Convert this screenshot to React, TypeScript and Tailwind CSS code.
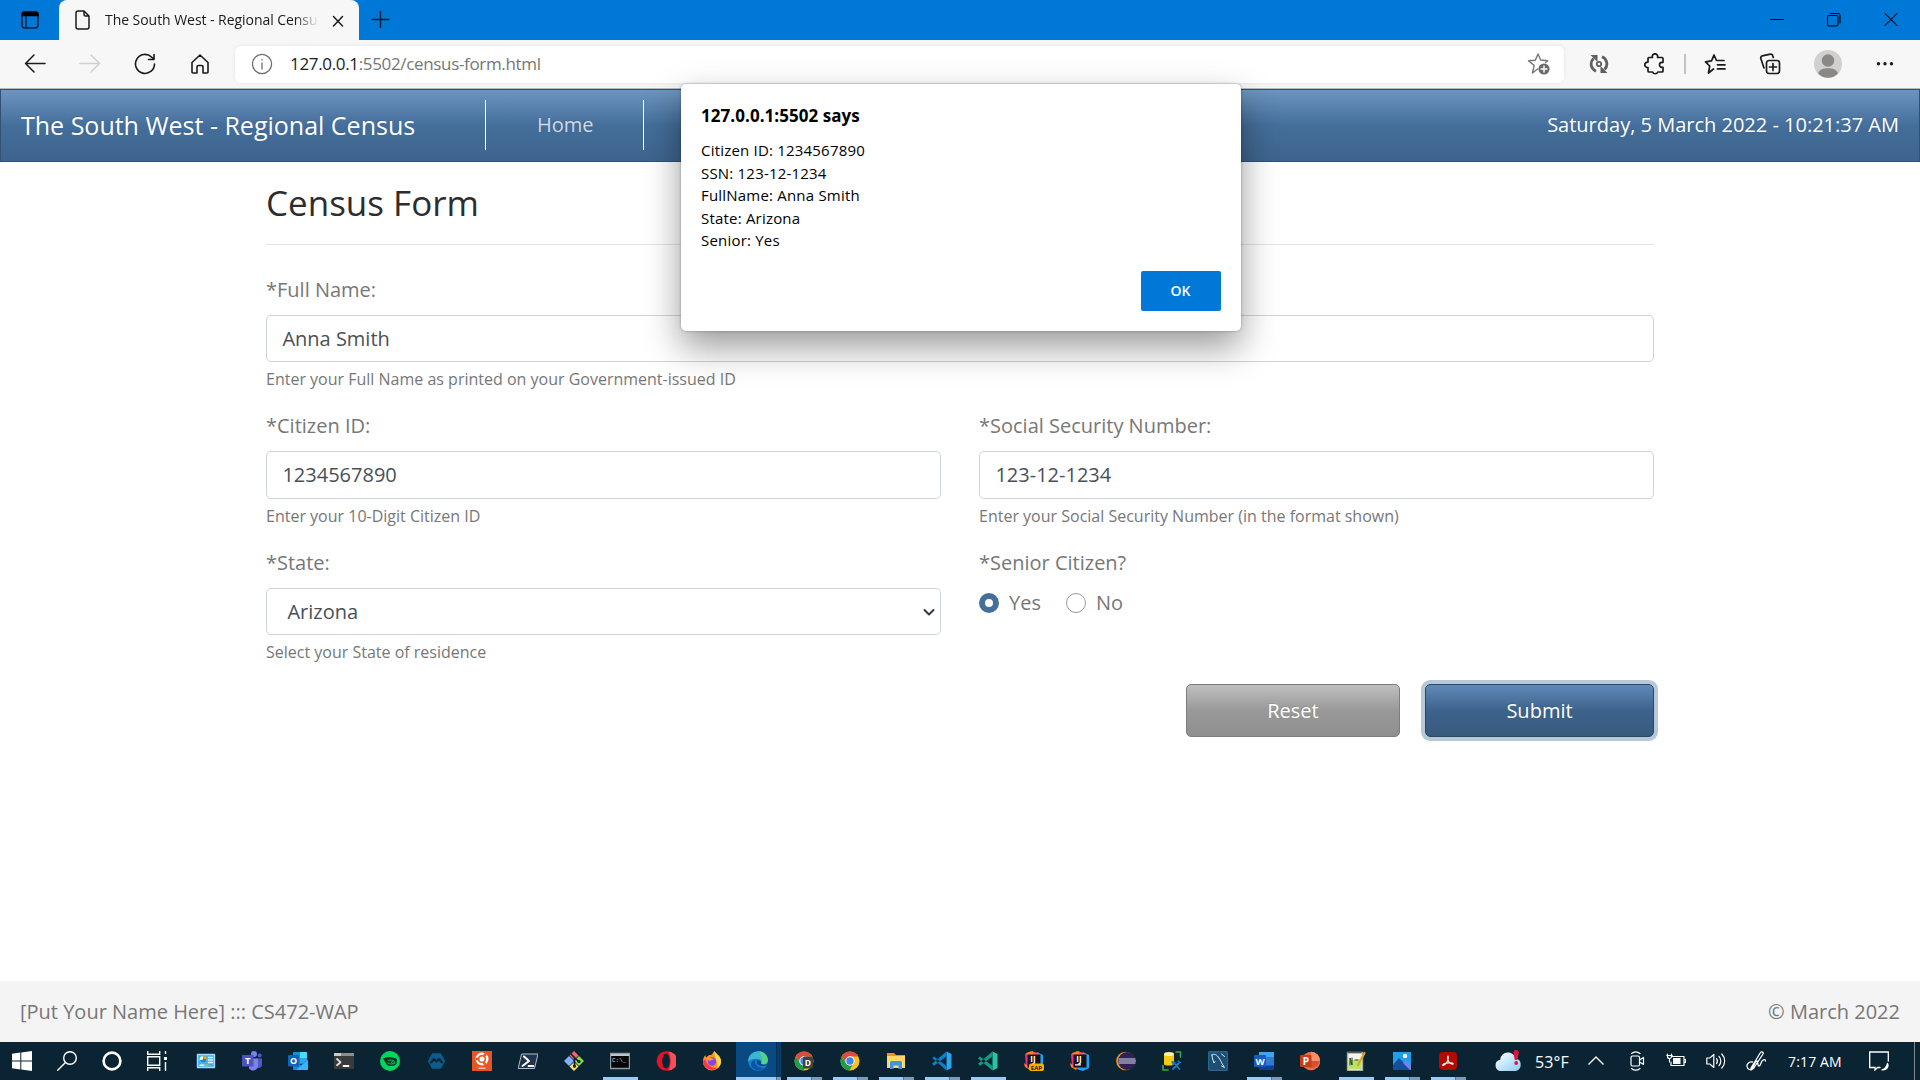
import React from "react";

const UI = "font-['Open_Sans',sans-serif]";

function Slot({ w, children, className = "" }: { w: string; children?: React.ReactNode; className?: string }) {
  return <div className={`flex h-full shrink-0 items-center justify-center ${w} ${className}`}>{children}</div>;
}

function Svg({ s = 20, children, stroke = "none", sw = 1.4, fill = "none" }: { s?: number; children: React.ReactNode; stroke?: string; sw?: number; fill?: string }) {
  return (
    <svg width={s} height={s} viewBox={`0 0 ${s} ${s}`} fill={fill} stroke={stroke} strokeWidth={sw} strokeLinecap="round" strokeLinejoin="round" className="block shrink-0">
      {children}
    </svg>
  );
}

function TabStrip() {
  return (
    <div className="flex h-10 items-stretch bg-[#0078d7]">
      <Slot w="w-[59px]">
        <Svg>
          <rect x="2" y="2" width="16" height="16" rx="3" stroke="#06203c" strokeWidth="1.6" />
          <path d="M1.2 6.2V4.4a3 3 0 0 1 3-3h11.600a3 3 0 0 1 3 3v1.800z" fill="#000" />
          <path d="M6 6v12" stroke="#06203c" strokeWidth="1.4" />
        </Svg>
      </Slot>
      <div className="flex w-[300px] items-center rounded-t-lg bg-[#f7f7f7] pl-[15px]">
        <Svg stroke="#1b1b1b" sw={1.5}>
          <path d="M2 3a2 2 0 0 1 2-2h6l5 5v11a2 2 0 0 1-2 2H4a2 2 0 0 1-2-2zM10 1v3.500a1.500 1.500 0 0 0 1.500 1.500H15" />
        </Svg>
        <div className="ml-[11px] w-[216px] overflow-hidden [mask-image:linear-gradient(to_right,#000_88%,transparent_99%)]">
          <div className="text-[14px] leading-[20px] tracking-[-0.05px] whitespace-nowrap text-[#1b1b1b]">The South West - Regional Census</div>
        </div>
        <div className="ml-[7px] mt-px">
          <Svg s={20} stroke="#1b1b1b" sw={1.5}><path d="M5.500 5.500l9 9.500M14.500 5.500l-9 9.500" /></Svg>
        </div>
      </div>
      <div className="flex items-center pl-[11px]">
        <Svg stroke="#021c33" sw={1.4}><path d="M10.500 1.500v16M2 9.500h17" /></Svg>
      </div>
      <div className="flex-1" />
      <Slot w="w-[57px]"><Svg stroke="#000" sw={1}><path d="M3.500 9.500h13" /></Svg></Slot>
      <Slot w="w-[57px]">
        <Svg stroke="#000" sw={1.1}>
          <rect x="3.500" y="5.500" width="10.500" height="10.500" rx="1.500" />
          <path d="M6.500 3.500h7.500a2 2 0 0 1 2 2V13" />
        </Svg>
      </Slot>
      <Slot w="w-[58px]"><Svg stroke="#041d35" sw={1.1}><path d="M4 3.500l12 12M16 3.500l-12 12" /></Svg></Slot>
    </div>
  );
}

function Toolbar() {
  return (
    <div className="flex h-12 items-center bg-[#f7f7f7] pl-[8px]">
      <Slot w="w-[54px]"><Svg s={22} stroke="#1b1b1b" sw={1.5}><path d="M21 10.500H1.500M10 2L1.500 10.500l8.500 8.500" /></Svg></Slot>
      <Slot w="w-[56px]"><Svg s={22} stroke="#cfcfcf" sw={1.5}><path d="M1 10.500h19.500M12 2l8.500 8.500-8.500 8.500" /></Svg></Slot>
      <Slot w="w-[54px]"><Svg s={22} stroke="#1b1b1b" sw={1.6}><path d="M20.500 11a9.500 9.500 0 1 1-3-7l2.500 2.500M20 1.500V6.500h-5.500" /></Svg></Slot>
      <Slot w="w-[56px]"><Svg s={22} stroke="#1b1b1b" sw={1.6}><path d="M3 9.500l8-7.500 8 7.500V19a1 1 0 0 1-1 1h-4v-6a1.500 1.500 0 0 0-1.500-1.500h-3A1.500 1.500 0 0 0 8 14v6H4a1 1 0 0 1-1-1z" /></Svg></Slot>
      <div className="ml-[7px] flex h-[37px] w-[1329px] items-center rounded-md bg-white pr-[13px] pl-4 shadow-[0_0_4px_rgba(0,0,0,0.08)]">
        <Svg s={22} stroke="#6e6e6e" sw={1.3}><circle cx="11" cy="11" r="9.600" /><path d="M11 10v6M11 6.500v.4" /></Svg>
        <div className="ml-[17px] text-[17px] tracking-[-0.34px] whitespace-nowrap text-[#767676]"><span className="text-[#1b1b1b]">127.0.0.1</span>:5502/census-form.html</div>
        <div className="flex-1" />
        <Svg s={24} stroke="#767676" sw={1.4}>
          <path d="M10.500 17l-5 4 1.600-7.600L1.500 8.800l6.800-.6L11 2l2.700 6 7 .8-2 1.800" />
          <circle cx="17" cy="17" r="5.600" fill="#6b6b6b" stroke="none" /><path d="M17 14v6M14 17h6" stroke="#fff" />
        </Svg>
      </div>
      <Slot w="w-[70px]">
        <Svg s={20} stroke="#5f5f5f" sw={2.8}>
          <path d="M7 17.200A7.700 7.700 0 0 1 4.500 4.500M13 2.800A7.700 7.700 0 0 1 15.500 15.500" strokeLinecap="butt" />
          <circle cx="10" cy="10" r="2.200" strokeWidth="1.800" />
          <path d="M1.500 1H8.500V8zM18.500 19H11.500V12z" fill="#5f5f5f" stroke="none" />
        </Svg>
      </Slot>
      <Slot w="w-[41px]">
        <Svg s={22} stroke="#1b1b1b" sw={1.7}>
          <path d="M5 4.500h3.500a2.700 2.700 0 1 1 5 0H18a1 1 0 0 1 1 1v3.800h-1a2.500 2.500 0 1 0 0 5h1V18a1 1 0 0 1-1 1h-4.200a2.800 2.800 0 0 1-5.200 0H5a1 1 0 0 1-1-1v-3.500a2.700 2.700 0 1 1 0-5.300V5.500a1 1 0 0 1 1-1z" />
        </Svg>
      </Slot>
      <Slot w="w-[20px]"><div className="h-5 w-[2px] bg-[#c3c3c3]" /></Slot>
      <Slot w="w-[39px]">
        <Svg s={22} stroke="#1b1b1b" sw={1.7}><path d="M9.500 16l-5 4 1.200-7L1.500 8.800l6-.9L10 2l2.500 5.500H20M13.500 11.800H21M13.500 15.900H21" /></Svg>
      </Slot>
      <Slot w="w-[71px]">
        <Svg s={22} stroke="#1b1b1b" sw={1.7}>
          <rect x="7.500" y="7.500" width="13" height="13" rx="2.500" />
          <path d="M14 10.500v7M10.500 14h7M5 15L1.800 5.500a2 2 0 0 1 1.500-2.600l8-1.700a2 2 0 0 1 2.500 1.500l.5 1.800" />
        </Svg>
      </Slot>
      <Slot w="w-[46px]">
        <Svg s={28}>
          <circle cx="14" cy="14" r="14" fill="#d2d0ce" />
          <circle cx="14" cy="10.500" r="6.200" fill="#8a8886" />
          <path d="M4 23.500c1.500-4 5.500-5.200 10-5.200s8.500 1.200 10 5.200a14 14 0 0 1-20 0z" fill="#8a8886" />
        </Svg>
      </Slot>
      <Slot w="w-[68px]"><Svg s={20} fill="#1b1b1b"><circle cx="3.500" cy="9.700" r="1.700" /><circle cx="10" cy="9.700" r="1.700" /><circle cx="16.500" cy="9.700" r="1.700" /></Svg></Slot>
    </div>
  );
}

function NavBar() {
  return (
    <div className="flex h-[73px] items-center border border-[#335172] bg-[linear-gradient(#6d94bf,#446e9b_50%,#3e648d)] text-white [text-shadow:-1px_-1px_0_rgba(0,0,0,0.1)]">
      <div className="w-[484px] pl-5 text-[25px] whitespace-nowrap">The South West - Regional Census</div>
      <div className="mb-[2px] flex h-[50px] w-[159px] items-center border-x border-white pl-[51px] text-[20px] text-white/75">Home</div>
      <div className="flex-1" />
      <div className="mb-[2px] pr-5 text-[20px] whitespace-nowrap">Saturday, 5 March 2022 - 10:21:37 AM</div>
    </div>
  );
}

function Field({ label, hint, children }: { label: string; hint: string; children: React.ReactNode }) {
  return (
    <div className="h-[136.4px] flex-1">
      <div className="h-10 pt-px text-[20px] leading-[28px]">{label}</div>
      <div className="flex h-[47.2px] items-center rounded-[5px] border border-[#ced4da] bg-white pt-[0.5px] pl-[15.4px] text-[20px] text-[#495057]">{children}</div>
      <div className="mt-[5px] text-[16px] leading-[24px]">{hint}</div>
    </div>
  );
}

function CensusForm() {
  return (
    <div className="h-[819px] bg-white px-[266px] text-[#777]">
      <h1 className="h-20 pt-px text-[35px] leading-[80px] text-[#2d2d2d]">Census Form</h1>
      <div className="mt-[2px] mb-[30px] h-px bg-[#e5e5e5]" />
      <div className="flex"><Field label="*Full Name:" hint="Enter your Full Name as printed on your Government-issued ID">Anna Smith</Field></div>
      <div className="flex gap-[38px]">
        <Field label="*Citizen ID:" hint="Enter your 10-Digit Citizen ID">1234567890</Field>
        <Field label="*Social Security Number:" hint="Enter your Social Security Number (in the format shown)">123-12-1234</Field>
      </div>
      <div className="flex gap-[38px]">
        <Field label="*State:" hint="Select your State of residence">
          <span className="ml-[5px] flex-1">Arizona</span>
          <span className="mr-[4px]"><Svg s={14} stroke="#343a40" sw={2}><path d="M2.500 5l4.500 4.500L11.500 5" /></Svg></span>
        </Field>
        <div className="flex-1">
          <div className="h-10 pt-px text-[20px] leading-[28px]">*Senior Citizen?</div>
          <div className="flex h-[30px] items-center text-[20px]">
            <span className="flex size-5 items-center justify-center rounded-full bg-[#446e9b]"><span className="size-2 rounded-full bg-white" /></span>
            <span className="ml-[10px] w-[57px]">Yes</span>
            <span className="size-5 rounded-full border border-[#999]" />
            <span className="ml-[10px]">No</span>
          </div>
        </div>
      </div>
      <div className="flex justify-end gap-[25px] text-[20px] text-white [text-shadow:-1px_-1px_0_rgba(0,0,0,0.1)]">
        <div className="flex h-[53px] w-[214px] items-center justify-center rounded-[5px] border border-[#7d7d7d] bg-[linear-gradient(#bfbfbf,#999_50%,#8f8f8f)]">Reset</div>
        <div className="flex h-[53px] w-[229px] items-center justify-center rounded-[5px] border border-[#2c4764] bg-[linear-gradient(#5f8ab9,#3d638b_50%,#385a7f)] shadow-[0_0_0_4px_rgba(96,132,170,0.45)]">Submit</div>
      </div>
    </div>
  );
}

function Dialog() {
  return (
    <div className="absolute top-[84px] left-[681px] flex h-[247px] w-[560px] flex-col rounded-[5px] bg-white px-5 text-black shadow-[0_0_3px_rgba(0,0,0,0.3),0_16px_36px_rgba(0,0,0,0.4)]">
      <div className="mt-[19px] text-[17px] leading-[25px] font-bold tracking-[0.05px]">127.0.0.1:5502 says</div>
      <div className="mt-[11px] text-[15px] leading-[22.5px] tracking-[0.2px]">
        <div>Citizen ID: 1234567890</div>
        <div>SSN: 123-12-1234</div>
        <div>FullName: Anna Smith</div>
        <div>State: Arizona</div>
        <div>Senior: Yes</div>
      </div>
      <div className="flex-1" />
      <div className="mb-5 flex h-10 w-20 items-center justify-center self-end rounded-[2px] bg-[#0078d7] pr-px pb-[2px] text-[14px] font-semibold text-white">OK</div>
    </div>
  );
}

function Chrome() {
  return (
    <g>
      <circle cx="10" cy="10" r="9.500" fill="#fbc116" />
      <path d="M1.800 5.200A9.500 9.500 0 0 1 18.300 5.500H10L7 13z" fill="#dd4b3e" />
      <path d="M1.800 5.200a9.500 9.500 0 0 0 7.600 14.300l4.300-7.300L6 12z" fill="#229a4c" />
      <circle cx="10" cy="10" r="4.700" fill="#fff" />
      <circle cx="10" cy="10" r="3.700" fill="#3f83ee" />
    </g>
  );
}

function Glyph({ x, y, size, fill, children }: { x: number; y: number; size: number; fill: string; children: string }) {
  return <text x={x} y={y} fontSize={size} fill={fill} fontFamily="Open Sans, sans-serif" fontWeight="700" textAnchor="middle">{children}</text>;
}

function IntelliJ({ eap }: { eap?: boolean }) {
  return (
    <g>
      <path d="M1 3l6-3 5 2-2 17-8-3z" fill="#f0298a" />
      <path d="M0 12l7 5-1 2-5-3zM2 2l7-2 2 4H3z" fill="#fc801d" />
      <path d="M13 1l6 3v13l-6 3-6-2z" fill="#18a5f7" />
      <path d="M9 1l6 1v4H9z" fill="#ff4f7d" />
      <rect x="3.500" y="3.500" width="13" height="13" fill="#17121a" />
      <Glyph x={9} y={10.800} size={8} fill="#fff">IJ</Glyph>
      {eap ? (
        <g><rect x="5" y="12.500" width="15" height="7.500" rx="2" fill="#f9ae00" /><Glyph x={12.500} y={18.600} size={6} fill="#2b2000">EAP</Glyph></g>
      ) : <path d="M5.500 13.800h5" stroke="#fff" strokeWidth="1.300" />}
    </g>
  );
}

type App = { id: string; run?: 1 | 2; active?: boolean; art: React.ReactNode };

const apps: App[] = [
  { id: "panel", art: <g><rect x="1.500" y="3.500" width="17" height="13" fill="#45b1ea" stroke="#a6dcf8" /><circle cx="7" cy="8.500" r="3.300" fill="#fff" /><path d="M7 8.500V5.200a3.300 3.300 0 1 1-3.200 4z" fill="#168bd2" /><path d="M7.500 8V5a3 3 0 0 1 3 3z" fill="#ffa000" /><path d="M12.500 6.500h4M12.500 9h4M12.500 11.500h4" stroke="#e4f6ff" strokeDasharray="1.500 1" /><path d="M4 14.200h4" stroke="#fff" strokeWidth="1.200" /><path d="M9 14.200h3" stroke="#ffb000" strokeWidth="1.200" /></g> },
  { id: "teams", art: <g><circle cx="12" cy="3" r="3" fill="#7b83eb" /><circle cx="17.700" cy="4.500" r="2" fill="#5059c9" /><path d="M14 7.500h6v6a3.500 3.500 0 0 1-6 2.500z" fill="#5059c9" /><path d="M7 7.500h9v7a5 5 0 0 1-9 3z" fill="#7b83eb" /><rect y="4" width="11.500" height="11.500" rx="1" fill="#4b53bc" /><Glyph x={5.800} y={13.300} size={9.500} fill="#fff">T</Glyph></g> },
  { id: "outlook", art: <g><rect x="5" y="1" width="14" height="12" rx="1" fill="#1490df" /><path d="M12 1h6a1 1 0 0 1 1 1v5h-7z" fill="#50d9ff" /><path d="M12 7h7v5h-7z" fill="#28a8ea" /><path d="M5 9l8 5 7-5v9a1 1 0 0 1-1 1H6a1 1 0 0 1-1-1z" fill="#1a86d9" /><path d="M20 9v9a1 1 0 0 1-1 1H8z" fill="#35b8f1" /><rect y="4" width="11" height="11.500" rx="1" fill="#0f64b5" /><Glyph x={5.500} y={13} size={9} fill="#fff">O</Glyph></g> },
  { id: "terminal", art: <g><rect y="2" width="20" height="16" fill="#3a3a3a" /><path d="M0 2h20v3H0z" fill="#8d8d8d" /><path d="M0 2h7v3H0z" fill="#c9c9c9" /><path d="M3 8l3.500 3.200-3.500 3" stroke="#ddd" strokeWidth="1.800" /><path d="M9.500 15h5" stroke="#fff" strokeWidth="1.800" /></g> },
  { id: "music", art: <g><circle cx="10" cy="10" r="10" fill="#00d65f" /><path d="M3 7.500c4-2 10-1.500 14 .5l-.5 5c-2 2-7 2.500-9.500 1z" fill="#082f24" /><path d="M8 9.500c2-1 5-.5 6 .5s0 2.500-1.500 2.300-1.500-2 .5-2.200M8 12c2 1.500 5 1.500 7 0" stroke="#00d65f" strokeWidth=".9" /></g> },
  { id: "hex", art: <g><path d="M6.500 3h8l4 7-4 7h-8l-4-7z" fill="#0c5c8c" stroke="#0c5c8c" /><path d="M5 11.500l3-3.500 2.500 2.500L13 8l3 3.500" stroke="#062233" strokeWidth="2" /></g> },
  { id: "ubuntu", art: <g><rect width="20" height="20" fill="#e95420" /><circle cx="10" cy="8" r="6.500" fill="#fff" /><circle cx="10" cy="8" r="3.300" stroke="#e95420" strokeWidth="1.500" /><circle cx="13" cy="3.800" r="1.500" fill="#e95420" /><circle cx="5" cy="8" r="1.500" fill="#e95420" /><circle cx="12.500" cy="12.500" r="1.400" fill="#e95420" /><path d="M7 17.300h6" stroke="#f7b7a0" /></g> },
  { id: "powershell", art: <g><path d="M4 3h16l-3.500 14.500H.5z" fill="#22344d" stroke="#aebdca" strokeWidth="1" /><path d="M6 5.500l5 4.500-6.500 5" stroke="#fff" strokeWidth="2" /><path d="M10.500 15h5" stroke="#fff" strokeWidth="1.800" /></g> },
  { id: "git", art: <g><path d="M10 0l4.500 4.500-4.500 4.500-4.500-4.500z" fill="#f5656c" /><path d="M5 5l5 5-5 5-5-5z" fill="#7fb2ff" /><path d="M15 5l5 5-5 5-5-5z" fill="#86d94c" /><path d="M10 11l4.500 4.500L10 20l-4.500-4.500z" fill="#ffdc6d" /><path d="M7 3l3.500 3.500V16M11 7l4 4" stroke="#102430" strokeWidth="1.700" /><circle cx="10.500" cy="15" r="1.600" fill="#102430" /><circle cx="15" cy="10.500" r="1.600" fill="#102430" /></g> },
  { id: "cmd", run: 1, art: <g><rect x=".500" y="2.500" width="19" height="15" fill="#050505" stroke="#8f9aa0" /><path d="M1 3h18v2H1z" fill="#bfc6ca" /><text x="2" y="11" fontSize="6" fill="#ddd" fontFamily="Liberation Mono, monospace">C:\_</text></g> },
  { id: "opera", art: <g><ellipse cx="10" cy="10" rx="9.300" ry="9.800" fill="#e3122b" /><path d="M12 .5a9.500 9.500 0 0 1 0 19c3.500-3 3.500-16 0-19z" fill="#f5505a" /><ellipse cx="10" cy="10" rx="3.800" ry="7.500" fill="#0b2433" /></g> },
  { id: "firefox", art: <g><path d="M10 19.500A9 9 0 0 1 1 10c0-2.500 1-4.500 2.500-6 0 1.200.3 2 1 2.500C6 4 8 4 9 4c1.500-1 2-2.500 3.500-4 1 3 6.500 4.500 6.500 10.500a9 9 0 0 1-9 9z" fill="#ff9226" /><path d="M12.500 0c1 3 6.500 4.500 6.500 10.500a9 9 0 0 1-4 7C17 12 12 7 12.500 0z" fill="#ffdc3d" /><path d="M1 10a9 9 0 0 0 14.500 7C11 18 4 14 3.500 8z" fill="#f5384f" /><circle cx="10" cy="10.500" r="4.200" fill="#8545e8" /><path d="M5 7.500c3-1.500 5-.5 7 1-2 0-3 1-4.500 1.500z" fill="#ffa02b" /></g> },
  { id: "edge", run: 2, active: true, art: <g><circle cx="10" cy="10" r="9.800" fill="#177fd3" /><path d="M.3 9A9.800 9.800 0 0 1 19.800 9c.3 3.500-3 5-7 3.800 1-1.500.5-4-2.300-4.800C6 7 2 8 .3 11z" fill="#3bb8d0" /><path d="M11 .3c6 .5 9 5 8.800 9.200-.3 3-3.500 4.300-7 3.300 2.500-3.500 1.500-8-1.800-12.500z" fill="#55d487" /><path d="M7.500 9C6 13 9 17.500 17 16.500 11 22 2 18 3 12.500 3.500 10 5.500 9 7.500 9z" fill="#0d54a5" /><path d="M9 9.500c-1.500 3 1.500 7 9 5l1.500-1.500c-2 1-5 1-6.500 0 1-2-1-4.500-4-3.500z" fill="#0a4a82" /></g> },
  { id: "chromeD", run: 2, art: <g><Chrome /><rect x="9" y="5.500" width="10" height="12" rx="1.500" fill="#414141" /><Glyph x={14} y={14.800} size={8.500} fill="#fff">D</Glyph></g> },
  { id: "chrome", run: 2, art: <Chrome /> },
  { id: "files", run: 2, art: <g><path d="M1 2h7l2 2h9v4H1z" fill="#e09b10" /><rect x="1" y="5" width="18" height="12" fill="#ffd869" /><path d="M4 18v-6.500a1.500 1.500 0 0 1 1.500-1.500h9a1.500 1.500 0 0 1 1.500 1.500V18h-3.500v-3.500h-5V18z" fill="#3c97e0" /></g> },
  { id: "code", run: 2, art: <g><path d="M14.500.5L19.500 3v14l-5 2.500z" fill="#2fa4ee" /><path d="M0 7.500l2-2L14.500 15v4.500L0 6.800zM0 12.800l2 2L14.500 5.300V.5z" fill="#0c80cc" /></g> },
  { id: "insiders", run: 1, art: <g><path d="M14.500.5L19.500 3v14l-5 2.500z" fill="#2cc5a2" /><path d="M0 7.500l2-2L14.500 15v4.500zM0 12.800l2 2L14.500 5.300V.5z" fill="#109c80" /></g> },
  { id: "ijeap", art: <IntelliJ eap /> },
  { id: "ij", art: <IntelliJ /> },
  { id: "eclipse", art: <g><circle cx="9.500" cy="10" r="9.300" fill="#f7941e" /><circle cx="11" cy="10" r="9" fill="#2c2255" /><path d="M3 8h16M3 10h16.500M3 12h16" stroke="#dcdcee" strokeWidth="1.100" /></g> },
  { id: "db", art: <g><path d="M2 3v10c0 2 10 2 10 0V3z" fill="#f6c713" /><ellipse cx="7" cy="3" rx="5" ry="2" fill="#fff0a2" /><path d="M14 1h4.500v5M1 14.500V19h5" stroke="#44a048" strokeWidth="1.600" /><path d="M11 18l6-6M12 12l5.500 6" stroke="#1979c3" strokeWidth="1.800" /><path d="M10 10.500l3 1-2 2zM16 10l2.500 1.500" stroke="#1979c3" strokeWidth="1.200" fill="#1979c3" /></g> },
  { id: "mysql", art: <g><rect x=".500" y=".500" width="19" height="19" rx="2" fill="#1d4f75" stroke="#2a658c" /><path d="M3.500 4c3-2 5.500 0 7.500 3s3 6 5.500 9.500l-3-1.500M4 4c0 3 1 5 2 8l1-1.500M13.500 3l3 2.500" stroke="#dfe9ef" strokeWidth="1" /></g> },
  { id: "word", run: 2, art: <g><rect x="5" y="1" width="15" height="18" rx="1" fill="#2b7cd3" /><path d="M5 1h15v5H5z" fill="#41a5ee" /><path d="M5 14.500h15V19H5z" fill="#103f91" /><rect y="4" width="12" height="12" rx="1" fill="#185abd" /><Glyph x={6} y={13.500} size={9.500} fill="#fff">W</Glyph></g> },
  { id: "ppt", art: <g><circle cx="11" cy="10" r="9.300" fill="#ed6c47" /><path d="M11 .7A9.300 9.300 0 0 1 20 10h-9z" fill="#ff8f6b" /><path d="M2 10h18a9.300 9.300 0 0 1-18 0z" fill="#d35230" /><rect y="4" width="11.500" height="12" rx="1" fill="#c43e1c" /><Glyph x={5.800} y={13.500} size={10} fill="#fff">P</Glyph></g> },
  { id: "notes", run: 1, art: <g><rect x="1.500" y="1.500" width="15" height="18" fill="#f3f5ee" stroke="#a7aba3" /><path d="M2.500 10c5-2 10 0 13-3v11h-13z" fill="#b4e566" /><path d="M4 14V7l2 7V7M9 9h3" stroke="#2d3b22" strokeWidth="1" /><path d="M18.500 2L12 14" stroke="#e3a11c" strokeWidth="2.200" /><path d="M2 1.500h14" stroke="#5a5a5a" strokeDasharray="1 1" /></g> },
  { id: "photos", run: 2, art: <g><rect x="1" y="1" width="18" height="18" fill="#1f9ee9" /><path d="M1 14l6-7 12 12H1z" fill="#154f9a" /><path d="M11 12l3-3 5 5v5h-1z" fill="#6f86e8" /><circle cx="13" cy="5" r="2.200" fill="#fff" /></g> },
  { id: "acrobat", run: 2, art: <g><rect x="1" y="1" width="18" height="18" rx="4" fill="#b30b00" /><path d="M10 5c1.500 3-1.500 8-4.500 9.500-1.500.5-1-1.500 2-2.200 3-.8 7-.8 7.500.3s-2.500.6-4-1.600S9.200 5.300 10 5z" stroke="#fff" strokeWidth="1.200" /></g> },
];

function TaskApp({ app }: { app: App }) {
  return (
    <div className="flex h-full w-[46px] shrink-0 justify-center">
      <div className={`flex h-full shrink-0 flex-col ${app.active ? "w-[45px] bg-[linear-gradient(to_right,#0a4a82_40px,#06304f_40px,#06304f_41px,#063c68_41px)] pl-0" : "w-[35px]"}`}>
        <div className="flex h-[35px] items-center justify-center pt-[3px]"><Svg>{app.art}</Svg></div>
        {app.run ? (
          <div className="flex h-[3px] w-full">
            <div className="flex-1 bg-[#9bcbf3]" />
            {app.run === 2 && <div className={`${app.active ? "w-[5px]" : "w-[11px]"} border-l border-[#527490] bg-[#7b9cb9]`} />}
          </div>
        ) : null}
      </div>
    </div>
  );
}

function TaskBar() {
  return (
    <div className="flex h-[38px] items-stretch bg-[#0b2433] text-white">
      <Slot w="w-[44px]"><Svg fill="#fff"><path d="M0 2.800l8.300-1.200v7.900H0zM9.300 1.400L20 0v9.500H9.300zM0 10.500h8.300v7.900L0 17.200zM9.300 10.500H20V20L9.300 18.500z" /></Svg></Slot>
      <Slot w="w-[46px]"><Svg stroke="#fff" sw={1.4}><circle cx="13" cy="7" r="6.300" /><path d="M8.500 11.500L.7 19.300" /></Svg></Slot>
      <Slot w="w-[44px]"><Svg stroke="#fff" sw={2.6}><circle cx="10" cy="10" r="8.400" /></Svg></Slot>
      <Slot w="w-[46px]">
        <Svg stroke="#fff" sw={1.4}><path d="M.7 0v3.300h12V0M.7 20v-3.300h12V20M.7 5.800h12v8.400H.7zM18.500 0v3M18.500 11v9" strokeLinecap="butt" strokeLinejoin="miter" /><rect x="17" y="6" width="3" height="3" fill="#fff" stroke="none" /></Svg>
      </Slot>
      <div className="w-[3px]" />
      {apps.map((a) => <TaskApp key={a.id} app={a} />)}
      <div className="flex w-[449px] items-center">
        <div className="ml-[24px]">
          <svg width="28" height="22" viewBox="0 0 28 22" className="block">
            <defs><linearGradient id="cloud" x1="0" y1="0" x2="1" y2="1"><stop offset="0" stopColor="#fff" /><stop offset="1" stopColor="#8dccf2" /></linearGradient></defs>
            <path d="M6 21a5.700 5.700 0 0 1-.8-11.300A7.500 7.500 0 0 1 13 2.500c4 0 6.500 2.500 7.200 5.700A6.500 6.500 0 0 1 20.500 21z" fill="url(#cloud)" />
            <path d="M18.500 2.500a2.600 2.600 0 0 1 5.200 0L22.500 10h-2.800z" fill="#e81143" /><circle cx="21.200" cy="13" r="1.900" fill="#e81143" />
          </svg>
        </div>
        <div className="ml-[12px] w-[50px] pt-[2px] text-[16px] leading-none tracking-[0.15px] whitespace-nowrap">53°F</div>
        <div className="w-[42px]"><Svg s={22} stroke="#fff" sw={1.4}><path d="M3.500 14.500L11 7l7.500 7.500" strokeLinecap="butt" /></Svg></div>
        <div className="w-[39px]"><Svg stroke="#fff" sw={1.2}><rect x="4" y="5" width="8.500" height="10" rx="1.500" /><path d="M12.500 9l4-2.500v7l-4-2.500M4.500 2.500c2.500-2 6-2 8.500 0M4.500 17.500c2.500 2 6 2 8.500 0" /></Svg></div>
        <div className="w-[40px]"><Svg stroke="#fff" sw={1.2}><path d="M6 5.500h12v9H5V11M18 8.500h1.500v3H18M1.500 3v2.500a2 2 0 0 0 4 0V3M.8 4.500h5.400M3.500 7.500v3.500" /><rect x="7" y="7" width="7.500" height="6" fill="#fff" stroke="none" /></Svg></div>
        <div className="w-[40px]"><Svg stroke="#fff" sw={1.2}><path d="M.8 7h3l4-3.500v13L3.800 13h-3zM10.500 7.500a4 4 0 0 1 0 5M13 5.300a7 7 0 0 1 0 9.400M15.800 3a10 10 0 0 1 0 14" /></Svg></div>
        <div className="w-[42px]"><Svg stroke="#fff" sw={1.3}><path d="M5 17L14.500 1.500c1-1.500 3.500 0 2.500 1.500L7.500 17.500 5 19zM6.500 11c-3-.5-6 1.500-5.500 4.500s4 4.500 5.500 1.500c1-2 3-7 4.500-7s0 5 2 5 1.500-4 3.500-5.500 3.500-.5 3 .5" /></Svg></div>
        <div className="w-[81px] text-[14px] tracking-[0.15px] whitespace-nowrap">7:17 AM</div>
        <div className="w-[45px]"><Svg stroke="#fff" sw={1.3}><path d="M11 16.500H8.500L6 19v-2.500H.7V1h18.600v9" strokeLinejoin="miter" /><path d="M18.500 12.500c1.500 3-1 7-5.500 6.300 3-.6 4.800-2.800 5.500-6.300z" fill="#fff" /></Svg></div>
        <div className="h-full w-px bg-[#7c8a93]" />
      </div>
    </div>
  );
}

export default function App() {
  return (
    <div className={`relative flex h-[1080px] w-[1920px] flex-col overflow-hidden bg-white ${UI}`}>
      <TabStrip />
      <Toolbar />
      <div className="h-px bg-[#b9b9b9]" />
      <NavBar />
      <CensusForm />
      <div className="flex h-[61px] items-center justify-between bg-[#f4f4f4] px-5 text-[20px] text-[#777]">
        <span>[Put Your Name Here] ::: CS472-WAP</span>
        <span>© March 2022</span>
      </div>
      <TaskBar />
      <Dialog />
    </div>
  );
}
